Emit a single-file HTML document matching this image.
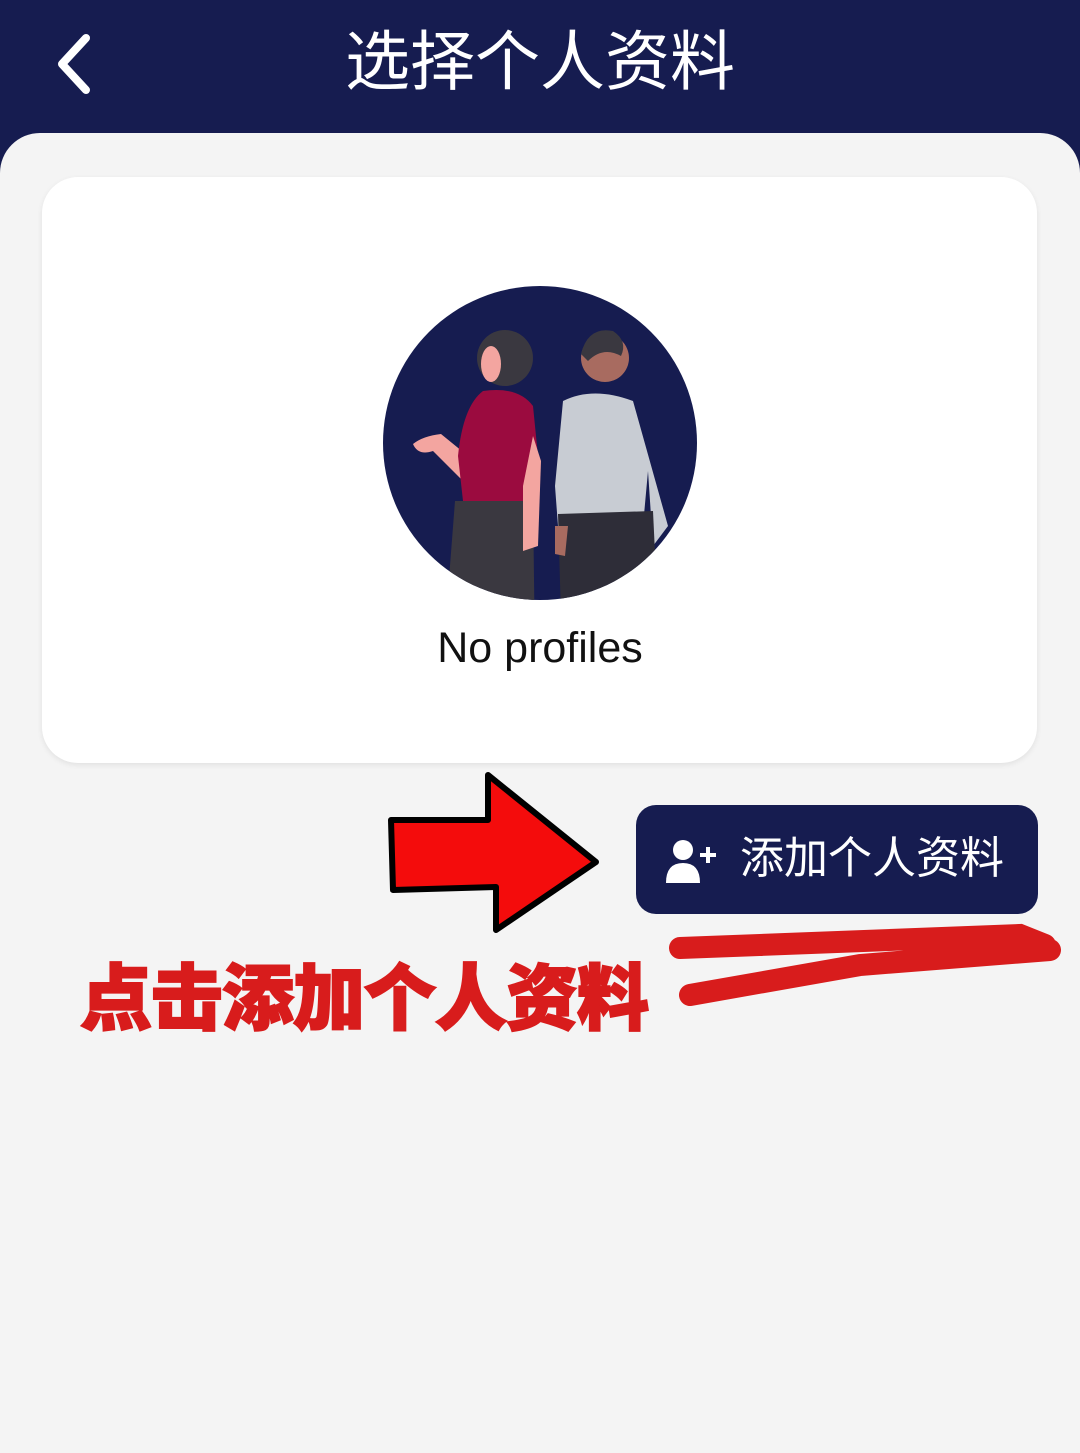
<!DOCTYPE html>
<html><head><meta charset="utf-8"><style>
html,body{margin:0;padding:0}
body{width:1080px;height:1443px;background:#161c50;position:relative;overflow:hidden;font-family:"Liberation Sans","Noto Sans CJK SC",sans-serif}
.sheet{position:absolute;left:0;top:133px;width:1080px;height:1320px;background:#f4f4f4;border-radius:40px 40px 0 0}
.title{position:absolute;top:22px;left:0;width:1080px;text-align:center;color:#fff;font-size:65px;line-height:80px}
.card{position:absolute;left:42px;top:177px;width:995px;height:586px;background:#fff;border-radius:36px;box-shadow:0 2px 6px rgba(0,0,0,.08)}
.np{position:absolute;top:624px;left:0;width:1080px;text-align:center;font-size:43px;color:#111}
.btn{position:absolute;left:636px;top:805px;width:402px;height:109px;background:#161c50;border-radius:20px;color:#fff;font-size:44px}
.btn span{position:absolute;left:104px;top:28px;line-height:52px}
.ann{position:absolute;left:80px;top:955px;font-size:72px;font-weight:900;color:#d81c1c;line-height:90px;letter-spacing:-1px;-webkit-text-stroke:2px #d81c1c}
</style></head><body>
<svg style="position:absolute;left:52px;top:34px" width="44" height="60" viewBox="0 0 44 60"><path d="M34 4 L10 30 L34 56" fill="none" stroke="#fff" stroke-width="8" stroke-linecap="round" stroke-linejoin="round"/></svg>
<div class="title">选择个人资料</div>
<div class="sheet"></div>
<div class="card"></div>
<svg style="position:absolute;left:383px;top:286px" width="314" height="314" viewBox="0 0 314 314">
<defs><clipPath id="c"><circle cx="157" cy="157" r="157"/></clipPath></defs>
<circle cx="157" cy="157" r="157" fill="#161c50"/>
<g clip-path="url(#c)">
<path d="M58 148 Q40 150 30 158 Q35 170 50 165 L80 195 L85 170 Z" fill="#f3a5a0"/>
<path d="M72 215 L150 215 L152 370 L60 370 Z" fill="#3a3840"/>
<path d="M100 105 Q135 100 150 120 L155 170 L150 215 L80 215 L75 170 Q80 120 100 105Z" fill="#9b0b3f"/>
<path d="M150 150 L158 175 L155 260 L140 265 L140 200 Z" fill="#f3a5a0"/>
<circle cx="122" cy="72" r="28" fill="#3a3840"/>
<ellipse cx="108" cy="78" rx="10" ry="18" fill="#f3a5a0"/>
<path d="M180 115 Q210 100 250 115 L285 240 L270 260 L265 185 L260 240 L175 240 L172 200 Z" fill="#c8ccd3"/>
<path d="M175 228 L270 225 L275 330 L178 330 Z" fill="#2e2d38"/>
<path d="M172 240 L185 240 L182 270 L172 268Z" fill="#a86b60"/>
<circle cx="222" cy="72" r="24" fill="#a86b60"/>
<path d="M198 68 Q205 40 230 45 Q245 55 238 70 Q220 60 205 75 Z" fill="#3a3840"/>
</g></svg>
<div class="np">No profiles</div>
<svg style="position:absolute;left:388px;top:772px" width="215" height="162" viewBox="0 0 215 162"><path d="M3 48 L100 48 L100 3 L208 90 L108 158 L108 115 L5 118 Z" fill="#f40c0c" stroke="#000" stroke-width="6" stroke-linejoin="round"/></svg>
<div class="btn">
<svg style="position:absolute;left:30px;top:34px" width="52" height="44" viewBox="0 0 52 44"><circle cx="17" cy="11" r="10" fill="#fff"/><path d="M0 44 Q0 24 17 24 Q34 24 34 44Z" fill="#fff"/><path d="M42 8 V24 M34 16 H50" stroke="#fff" stroke-width="4"/></svg>
<span>添加个人资料</span></div>
<svg style="position:absolute;left:660px;top:920px" width="410" height="90" viewBox="0 0 410 90"><path d="M20 28 L360 15 L385 25 M30 75 L200 45 L390 30" fill="none" stroke="#d81c1c" stroke-width="22" stroke-linecap="round"/></svg>
<div class="ann">点击添加个人资料</div>
</body></html>
